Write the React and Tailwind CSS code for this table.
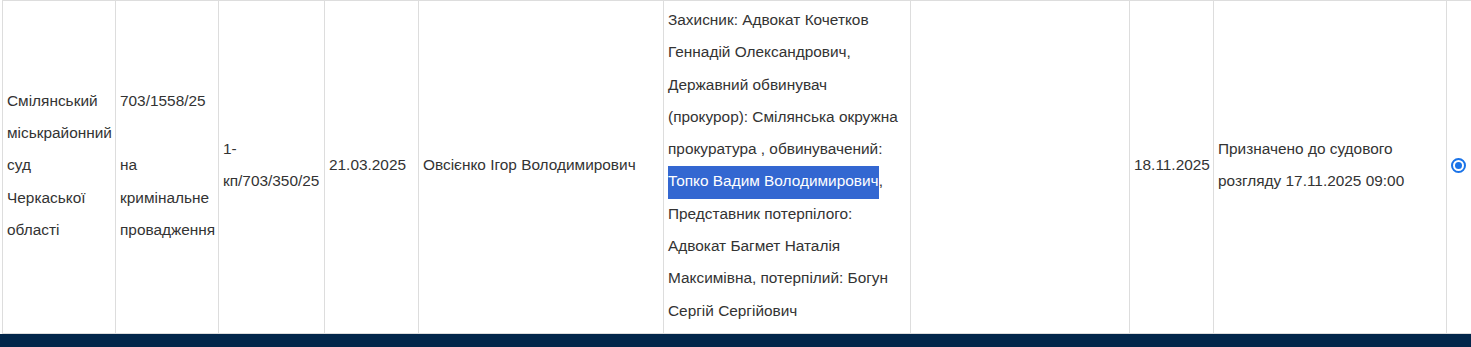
import React from 'react';

const cell = "border border-[#dddddd] px-[4px] pt-[3px] pb-[6px] align-middle";

const App = () => {
    return (
        <div className="w-[1471px] h-[347px] overflow-hidden bg-white font-['Liberation_Sans',Arial,sans-serif] text-[15.4px] leading-[32.3px] text-[#333333]">
            <table className="ml-[2px] table-fixed border-collapse w-[1484px]">
                <colgroup>
                    <col className="w-[113px]" />
                    <col className="w-[103px]" />
                    <col className="w-[106px]" />
                    <col className="w-[94px]" />
                    <col className="w-[245px]" />
                    <col className="w-[247px]" />
                    <col className="w-[219px]" />
                    <col className="w-[84px]" />
                    <col className="w-[233px]" />
                    <col className="w-[40px]" />
                </colgroup>
                <tbody>
                    <tr>
                        <td className={cell}>Смілянський міськрайонний суд Черкаської області</td>
                        <td className={cell}>
                            703/1558/25
                            <br />
                            <br />
                            на кримінальне провадження
                        </td>
                        <td className={cell}>1-кп/703/350/25</td>
                        <td className={cell}>21.03.2025</td>
                        <td className={cell}>Овсієнко Ігор Володимирович</td>
                        <td className={cell}>
                            Захисник: Адвокат Кочетков Геннадій Олександрович, Державний обвинувач (прокурор): Смілянська окружна прокуратура , обвинувачений:{' '}
                            <span className="bg-[#3367d1] text-white pt-[6px] pb-[10px]">Топко Вадим Володимирович</span>, Представник потерпілого: Адвокат Багмет Наталія Максимівна, потерпілий: Богун Сергій Сергійович
                        </td>
                        <td className={cell}></td>
                        <td className={cell}>18.11.2025</td>
                        <td className={cell}>Призначено до судового розгляду 17.11.2025 09:00</td>
                        <td className={cell}>
                            <span className="flex h-[15px] w-[15px] items-center justify-center rounded-full border-2 border-[#1a73e8] bg-white">
                                <span className="h-[7px] w-[7px] rounded-full bg-[#1a73e8]" />
                            </span>
                        </td>
                    </tr>
                </tbody>
            </table>
            <div className="h-[14px] bg-[#02264a]" />
        </div>
    );
};

export default App;
